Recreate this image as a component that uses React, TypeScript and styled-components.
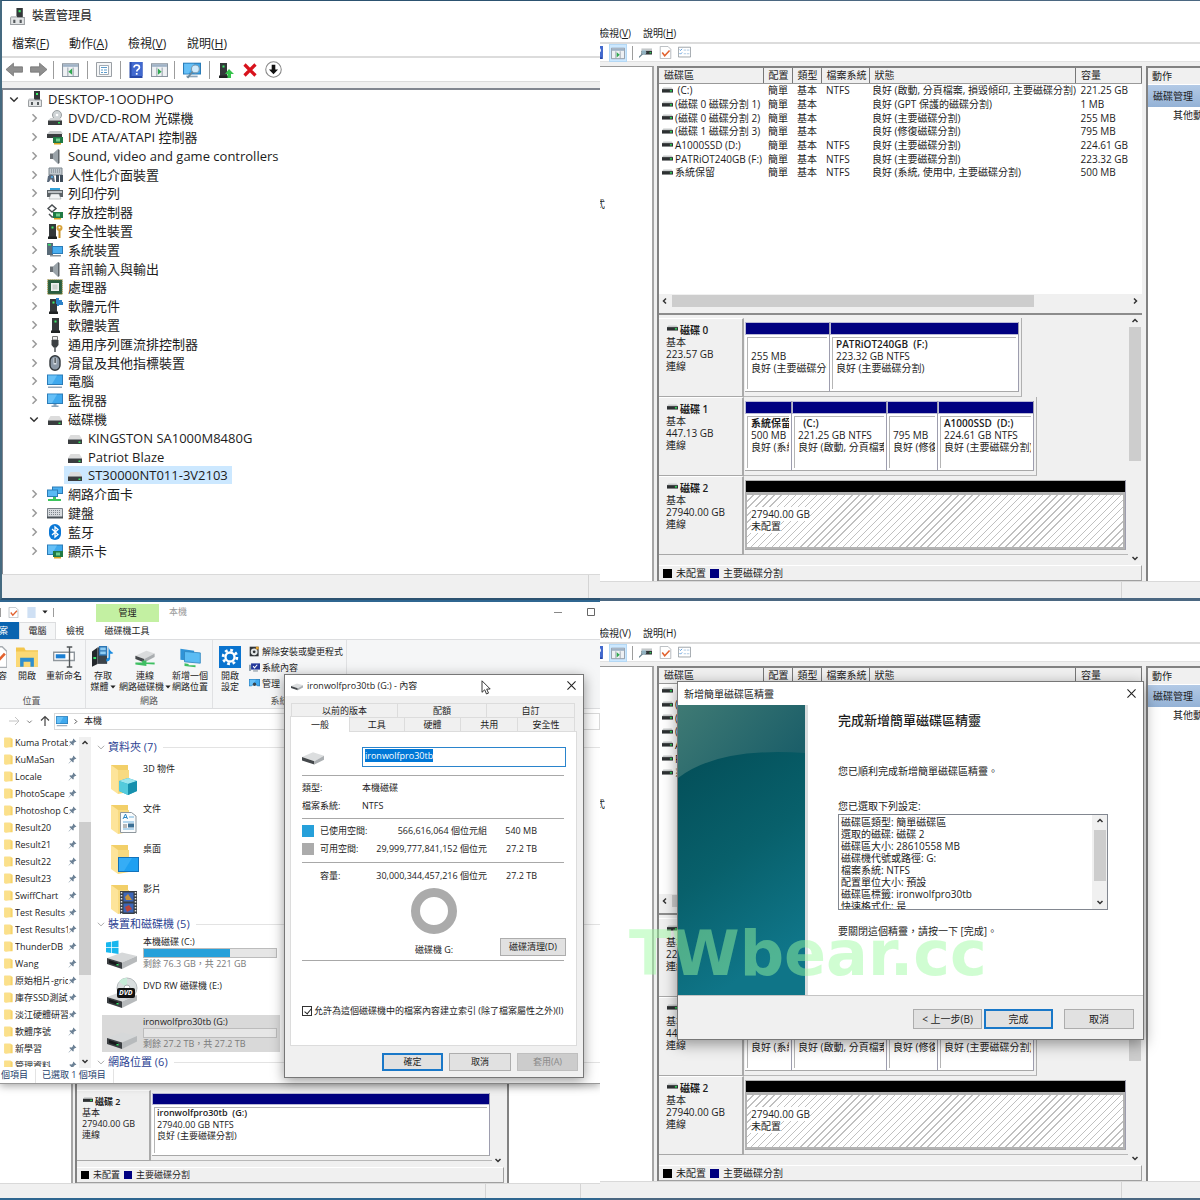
import React, { useEffect, useRef } from "react";
import styled, { createGlobalStyle, css } from "styled-components";

const GlobalStyle = createGlobalStyle`
  * { box-sizing: border-box; }
  body { margin: 0; background: #f0f0f0; }
  body, button, input, textarea, table {
    font-family: "Open Sans", "Noto Sans CJK TC", sans-serif;
    color: #1c1c1c;
  }
  button { border: 0; padding: 0; background: none; font-size: inherit; line-height: inherit; white-space: nowrap; }
`;

/* ---------- icons ---------- */

const disk = (
  <>
    <path d="M3.500 5h9l2.500 4H1z" fill="#dcdcdc" />
    <path d="M1 9h14v5H1z" fill="#3a3d3f" />
    <path d="M1 9h14v1H1z" fill="#8d9092" />
    <path d="M11.500 11.500h2v1.500h-2z" fill="#2fe05a" />
  </>
);
const board = (
  <>
    <path d="M6 8h10v6H6z" fill="#1f7a45" />
    <path d="M9 9.500h4v3H9z" fill="#6fce8b" />
    <path d="M7 14h7v1.500H7z" fill="#d9a520" />
  </>
);
const tower = (
  <>
    <path d="M5 1h7v13H5z" fill="#34383a" />
    <path d="M4 13.500h9V16H4z" fill="#202324" />
    <path d="M7.500 3.500h2v2h-2z" fill="#3df06a" />
  </>
);
const screen = (
  <>
    <path d="M0 1.500h16v10.500H0z" fill="#2b7cb8" />
    <path d="M1 2.500h14v8.500H1z" fill="#3fa9ee" />
    <path d="M1 2.500h9L5 11H1z" fill="#66c0f7" />
  </>
);
const speaker = (
  <>
    <path d="M3 5.500h3v5.500H3z" fill="#6a7075" />
    <path d="M6 5.500L11 1v15l-5-5z" fill="#9aa3a9" />
    <path d="M11 1l1.500 1v13L11 16z" fill="#5d6469" />
  </>
);
const panelWindow = (
  <>
    <path d="M.5 2.500h15v12H.5z" fill="#eef1f4" stroke="#8a949e" />
    <path d="M1 3h14v2.500H1z" fill="#9fb2c6" />
    <path d="M5.500 6v8M10.500 6v8" stroke="#9aa4ae" />
  </>
);
const folder = (
  <>
    <path d="M2 1h9l3 2v12H2z" fill="#f5d36b" />
    <path d="M2 1h9v13l-7 1.500L2 14z" fill="#fbe08b" />
  </>
);
const bigFolder = (
  <>
    <path d="M2 2h17v24H2z" fill="#f2cf68" />
    <path d="M2 2l7 5v24l-7-5z" fill="#fde49a" />
    <path d="M9 7h11v22l-11 2z" fill="#f8da80" />
  </>
);
const bigDisk = (
  <>
    <path d="M1 20L16 14.500l15 3.500-15 6.500z" fill="#d6d8d9" />
    <path d="M1 20l15 4.500V31L1 26z" fill="#3b3f42" />
    <path d="M16 24.500L31 18v5.500L16 31z" fill="#b7babc" />
    <path d="M3 22l9 3v3l-9-3z" fill="#16191b" />
    <path d="M10.500 26h2v1.500h-2z" fill="#35e36a" />
  </>
);

const ICONS: Record<string, React.ReactNode> = {
  computer: (
    <>
      <path d="M7 0h6v10H7z" fill="#34383a" />
      <path d="M9 2h2v2H9z" fill="#3df06a" />
      <path d="M1.500 9h13v6.500h-13z" fill="#e3e5e6" stroke="#9a9ea1" />
      <path d="M4 11h2v3H4zM10 11h2v3h-2z" fill="#555a5d" />
      <path d="M2 7.500h5l1 2H1z" fill="#c5c8ca" />
    </>
  ),
  disk,
  dvd: (
    <>
      <circle cx="10" cy="5" r="4.500" fill="#cfd4d6" stroke="#989d9f" />
      <circle cx="10" cy="5" r="1.300" fill="#fff" />
      <path d="M3.500 8h9l2.500 2.500H1z" fill="#cfd2d3" />
      <path d="M1 10.500h14V15H1z" fill="#3a3d3f" />
      <path d="M11 12h2v1.500h-2z" fill="#2fe05a" />
    </>
  ),
  ide: (
    <>
      <path d="M3 2h11l2 3H0z" fill="#c9cccd" />
      <path d="M0 5h15v4H0z" fill="#3a3d3f" />
      {board}
    </>
  ),
  speaker,
  hid: (
    <>
      <path d="M2 1h13v7H2z" fill="#c0c8ce" stroke="#7c868d" />
      <path d="M4 3h9M4 5h9" stroke="#6f7a82" strokeDasharray="1 1" />
      <path d="M1 9q3-3 6 0l1 6H6L4 12l-2 3H0z" fill="#59687a" />
      <path d="M9 8h3v7H9zM13 8h3v7h-3z" fill="#3f4d5b" />
      <circle cx="5" cy="10" r="1" fill="#4fb4f2" />
    </>
  ),
  printer: (
    <>
      <path d="M3 3h10v3H3z" fill="#30a0d8" />
      <path d="M0 5h16v7H0z" fill="#5b6266" />
      <path d="M1 6h14v2H1z" fill="#b9bec1" />
      <path d="M4 9h8l2 5H2z" fill="#f1f3f4" stroke="#8e9497" strokeWidth=".5" />
    </>
  ),
  storage: (
    <>
      <path d="M1 4.500L5 1l4 3.500L5 8z" fill="none" stroke="#4a4f52" strokeWidth="1.500" />
      <path d="M2 10l3 3h4" fill="none" stroke="#4a4f52" strokeWidth="1.500" />
      {board}
    </>
  ),
  security: (
    <>
      <g transform="translate(-3 0)">{tower}</g>
      <circle cx="12.500" cy="5" r="3" fill="#d8a23a" />
      <circle cx="12.500" cy="4.500" r="1" fill="#fff" />
      <path d="M11.500 7h2v8h-2z" fill="#c8922c" />
    </>
  ),
  system: (
    <>
      <path d="M0 1h6v12H0z" fill="#596b78" />
      <path d="M1 2h3v1.500H1z" fill="#35e36a" />
      <path d="M5 4h11v8H5z" fill="#2b7cb8" />
      <path d="M6 5h9v6H6z" fill="#49aef0" />
      <path d="M3 13h11v1.500H3z" fill="#8a9298" />
    </>
  ),
  cpu: (
    <>
      <path d="M.7.7h14.600v14.600H.7z" fill="#2a5e3f" stroke="#b99b4b" strokeDasharray="1 1" />
      <path d="M2 2h12v12H2z" fill="#2a5e3f" />
      <path d="M4 4h8v8H4z" fill="#eef1ef" />
      <path d="M5.500 5.500h5v5h-5z" fill="#ccd4cf" />
    </>
  ),
  softcomp: (
    <>
      <g transform="translate(-2 0)">{tower}</g>
      <path d="M9 0h3v2h3v2h1v3h-4v1h-2V6H9z" fill="#2b82c9" />
    </>
  ),
  softdev: tower,
  usb: (
    <>
      <path d="M5.500.5h5V4h-5z" fill="#eee" stroke="#777" />
      <path d="M4.500 4h7v5L9.500 11.500h-3L4.500 9z" fill="#3c4043" />
      <path d="M7.200 11h1.600v5H7.200z" fill="#55595c" />
    </>
  ),
  mouse: (
    <>
      <rect x="3" y=".7" width="10" height="14.600" rx="5" fill="#8b98a6" stroke="#2f3539" strokeWidth="1.400" />
      <path d="M6.500 3h3v6.500h-3z" fill="#d7dee4" />
      <path d="M7.500 3h1.200v5H7.500z" fill="#2f3539" />
    </>
  ),
  pc: (
    <>
      {screen}
      <path d="M1 13.500h14V15H1z" fill="#93a6b8" />
    </>
  ),
  monitor: (
    <>
      {screen}
      <path d="M6.500 12h3v1.500h2V15h-7v-1.500h2z" fill="#8aa5bb" />
    </>
  ),
  network: (
    <>
      <path d="M5 .5h11V8H5z" fill="#2b7cb8" />
      <path d="M6 1.500h9V7H6z" fill="#4db1f1" />
      <path d="M0 3.500h11V11H0z" fill="#2b7cb8" />
      <path d="M1 4.500h9V10H1z" fill="#5abaf5" />
      <path d="M6 11h3v2h5v2H1v-2h5z" fill="#3cc45d" />
    </>
  ),
  keyboard: (
    <>
      <path d="M.5 3.500h15v9H.5z" fill="#d6dade" stroke="#767e85" />
      <path d="M2 5.500h12M2 7.500h12M2 9.500h12" stroke="#7e868d" strokeDasharray="1 1" />
      <path d="M0 11.500h16v2H0z" fill="#4b5258" />
    </>
  ),
  bluetooth: (
    <>
      <rect x="2" y="0" width="12" height="16" rx="6" fill="#0a78d6" />
      <path d="M5 5l6 5.500L8 13V3l3 2.500L5 11" fill="none" stroke="#fff" strokeWidth="1.300" />
    </>
  ),
  display: (
    <>
      {screen}
      {board}
    </>
  ),
  back: <path d="M0 8l7-6v3.500h8.500v5H7V14z" fill="#8f8f8f" stroke="#6f6f6f" strokeWidth=".7" />,
  forward: <path d="M16 8L9 2v3.500H.5v5H9V14z" fill="#8f8f8f" stroke="#6f6f6f" strokeWidth=".7" />,
  treePane: (
    <>
      {panelWindow}
      <path d="M9.500 7v6L6 10z" fill="#2fa84f" />
    </>
  ),
  actionPane: (
    <>
      {panelWindow}
      <path d="M6.500 7v6L10 10z" fill="#2fa84f" />
    </>
  ),
  properties: (
    <>
      <path d="M.5.5h15v14H.5z" fill="#f5f6f7" stroke="#9a9fa4" />
      <path d="M3.500 3.500h9v9h-9z" fill="#fff" stroke="#a4acb4" />
      <path d="M5 5.500h6M5 8h2M8 8h3M5 10.500h2M8 10.500h3" stroke="#5c9ccc" />
    </>
  ),
  help: (
    <>
      <path d="M1.500 0h13v16h-13z" fill="#2748a8" />
      <path d="M3.500 0h11v14h-11z" fill="#4169cf" />
      <path d="M6 5.500q0-2.300 2.700-2.300t2.700 2.200q0 1.300-1.400 2.100-1.200.7-1.200 2M8.700 11v1.800" fill="none" stroke="#fff" strokeWidth="1.700" />
    </>
  ),
  scan: (
    <>
      {screen}
      <path d="M3 13h10v1.500H3z" fill="#8aa5bb" />
      <circle cx="11" cy="7" r="3.500" fill="#cfeafc" stroke="#7d99ad" />
      <path d="M8.500 9.500L4 15" stroke="#6d8799" strokeWidth="1.500" />
    </>
  ),
  update: (
    <>
      <g transform="translate(-3 0)">{tower}</g>
      <path d="M11 7l5 5h-3v4H9.500v-4H7z" fill="#35c24b" />
    </>
  ),
  remove: <path d="M2.500 2.500l11 11M13.500 2.500l-11 11" stroke="#d8121c" strokeWidth="3.200" />,
  disable: (
    <>
      <circle cx="8" cy="8" r="7.300" fill="#fff" stroke="#888" />
      <path d="M6.300 3.500h3.400V8h2.600L8 12.500 3.700 8h2.600z" fill="#111" />
    </>
  ),
  rescan: (
    <>
      <path d="M3 3h13v3H3z" fill="#c4c8ca" />
      <path d="M3 6h13v4.500H3z" fill="#34383a" />
      <path d="M13 7.500h2V9h-2z" fill="#2fe05a" />
      <circle cx="6" cy="8" r="3" fill="#a9cfe2" opacity=".8" />
      <path d="M4 10l-4 4" stroke="#6c8492" strokeWidth="1.700" />
    </>
  ),
  check: (
    <>
      <path d="M1.500.5H11L14.500 4v11.500h-13z" fill="#fff" stroke="#a8adb2" />
      <path d="M4 8l3 4 6-6.500" fill="none" stroke="#e2622f" strokeWidth="1.900" />
    </>
  ),
  list: (
    <>
      <path d="M.5 1.500h15v12H.5z" fill="#fff" stroke="#8b9299" />
      <path d="M2 4.500l1 1 2-2M2 9l1 1 2-2" fill="none" stroke="#2d7fd0" />
      <path d="M7 5h3M11 5h3M7 9.500h3M11 9.500h3" stroke="#9cbfdf" />
    </>
  ),
  page: <path d="M2 0h12v16H2z" fill="#cfe0f4" />,
  volume: (
    <>
      <path d="M2 3.500h12l2 2.500H0z" fill="#c8cbcc" />
      <path d="M0 6h16v5H0z" fill="#2d3032" />
      <path d="M11.500 7.500h3v2h-3z" fill="#2fe05a" />
    </>
  ),
  folder,
  pin: (
    <path d="M9.500 1L15 6.500l-1.500.8-1-.3-2.500 2.500.2 3L9 13.500 6 10.500 1.500 15 1 14.500 5.500 10l-3-3L3.500 5.800l3 .2L9 3.500l-.3-1z" fill="#6d8296" />
  ),
  openFolder: (
    <>
      <path d="M0 1h6l1 2h9v12H0z" fill="#f3c64d" />
      <path d="M0 4h16v11H0z" fill="#fbd976" />
      <path d="M3 15V8.500h10V15h-2.500v-3.500h-5V15z" fill="#2f8fce" />
    </>
  ),
  rename: (
    <>
      <path d="M.5 4.500h15v6H.5z" fill="#fff" stroke="#8f969c" />
      <path d="M2 6h7v3H2z" fill="#1b7fd3" />
      <path d="M10 .7h4M12 .7v14.600M10 15.300h4" stroke="#505558" />
    </>
  ),
  media: (
    <>
      <path d="M0 4l4-3v12l-4 2z" fill="#22272b" />
      <path d="M4 1h7v12H4z" fill="#3b434a" />
      <path d="M5 0h6v7H5z" fill="#2c76b5" />
      <path d="M6 1h4v2H6zM6 4h4v2H6z" fill="#8ecbf2" />
      <path d="M12 0q0 3 3.500 5-1 1-2.300.6V9.500q-.5 2-2.700 1.700-.8-2 1.500-2.700z" fill="#1b8ce0" />
      <path d="M1 8h2v1.500H1z" fill="#35e36a" />
    </>
  ),
  netDrive: (
    <>
      <path d="M1 7l8-3.500 6 2L7.500 9.500z" fill="#d9dbdc" />
      <path d="M1 7l6.500 2.500V12L1 9.500z" fill="#44484b" />
      <path d="M7.500 9.500l7.500-4V8l-7.500 4z" fill="#a9adb0" />
      <path d="M1 12h5v-1.500h3V12h6v1.500L9 13v1.500L1 13.500z" fill="#3fbf62" />
    </>
  ),
  netPlace: (
    <>
      <path d="M1 2l10 1.500V11L1 10z" fill="#2f93d7" />
      <path d="M4 4l11.500 1v7.500L4 11.500z" fill="#5bbcf4" stroke="#2f86c0" strokeWidth=".6" />
      <path d="M4 12.500l3 .5v1h5v1.500L4 14.500z" fill="#3fbf62" />
    </>
  ),
  gear: (
    <>
      <path d="M0 0h16v16H0z" fill="#0a74cf" />
      <circle cx="8" cy="8" r="3.300" fill="none" stroke="#fff" strokeWidth="1.700" />
      <circle cx="8" cy="8" r="5" fill="none" stroke="#fff" strokeWidth="2" strokeDasharray="2 1.927" />
    </>
  ),
  uninstall: (
    <>
      <path d="M1 1h13v14H1z" fill="#2f3336" />
      <circle cx="7.500" cy="8.500" r="5" fill="#e2e5e6" />
      <circle cx="7.500" cy="8.500" r="2" fill="#2f3336" />
      <path d="M10 1h4v4h-4z" fill="#e0a02f" />
    </>
  ),
  sysprops: (
    <>
      <path d="M0 4h3v9H0z" fill="#8fa0ae" />
      <path d="M3 2h13v9H3z" fill="#23379a" />
      <path d="M6 6l2 2.500L12 4" fill="none" stroke="#fff" strokeWidth="1.500" />
      <path d="M6 12h7v2H6z" fill="#98a4ad" />
    </>
  ),
  manage: (
    <>
      {screen}
      <path d="M3 16q0-6 5-6t5 6z" fill="#f2f5f7" />
      <circle cx="8" cy="9" r="2.500" fill="#39444c" />
    </>
  ),
  smallDrive: (
    <>
      <path d="M0 8l8-3.500 8 2.500-7 4z" fill="#dcdedf" />
      <path d="M0 8l9 3v2.500L0 10.500z" fill="#44484b" />
      <path d="M9 11l7-4v3l-7 3.500z" fill="#abafb2" />
    </>
  ),
};

const BIG_ICONS: Record<string, React.ReactNode> = {
  objects: (
    <>
      {bigFolder}
      <path d="M10 18l9-3 9 3v10l-9 4-9-4z" fill="#27a8c4" />
      <path d="M10 18l9-3 9 3-9 3z" fill="#9be6ee" />
      <path d="M19 21l9-3v10l-9 4z" fill="#1690ad" />
      <path d="M10 18l9 3v11l-9-4z" fill="#54cbdc" />
    </>
  ),
  documents: (
    <>
      {bigFolder}
      <path d="M11.500 9.500h11L27 13v16.500H11.500z" fill="#fafcfd" stroke="#8e979d" />
      <path d="M14 16l2.500-5 2 5M15 14.500h3" fill="none" stroke="#2b86c5" />
      <path d="M20 14h5M14 19h11M14 26h11" stroke="#6fb0dc" />
      <path d="M19 20.500h6v4h-6z" fill="#3b6f94" />
      <path d="M14 22h4M14 24h4" stroke="#777" />
    </>
  ),
  desktop: (
    <>
      {bigFolder}
      <path d="M9 14h21v15H9z" fill="#1272bb" />
      <path d="M10 15h19v13H10z" fill="#1ea0f1" />
      <path d="M10 15h13l-8 13h-5z" fill="#35adf6" />
    </>
  ),
  videos: (
    <>
      {bigFolder}
      <path d="M11 8h17v23H11z" fill="#3a3f45" />
      <path d="M12.500 9v22M26.500 9v22" stroke="#e8eaec" strokeWidth="1.500" strokeDasharray="1.500 1.500" />
      <path d="M14.500 9.500h10v9h-10zM14.500 20.500h10v9h-10z" fill="#3c66b8" />
      <path d="M16 14l3-3 4 6h-6z" fill="#c5923e" />
      <path d="M20 22l3 4-5 3-2-5z" fill="#b9453c" />
    </>
  ),
  windowsDrive: (
    <>
      {bigDisk}
      <path d="M0 4.500L5.300 3.700V9H0zM6 3.600L12.500 2.600V9H6zM0 9.800h5.300v5.200L0 14.200zM6 9.800h6.500v6.300L6 15.100z" fill="#18b7ee" />
    </>
  ),
  dvdDrive: (
    <>
      {bigDisk}
      <circle cx="21" cy="11" r="10" fill="#d9dedf" stroke="#b5bbbd" />
      <path d="M21 11L13 4.500a10 10 0 0 1 8-3.500z" fill="#c7ecd8" />
      <circle cx="21" cy="11" r="3" fill="#fff" stroke="#aab0b2" />
    </>
  ),
  drive: bigDisk,
};

const Svg = styled.svg<{ $w: number }>`
  width: ${(p) => p.$w}px;
  height: ${(p) => p.$w}px;
  flex: none;
  display: block;
`;
const Icon = ({ name, size = 16 }: { name: string; size?: number }) => (
  <Svg $w={size} viewBox="0 0 16 16" aria-hidden="true">{ICONS[name]}</Svg>
);
const BigIcon = ({ name, size = 32 }: { name: string; size?: number }) => (
  <Svg $w={size} viewBox="0 0 32 32" aria-hidden="true">{BIG_ICONS[name]}</Svg>
);

const CHEVRONS = {
  up: "M3 10l5-5 5 5",
  down: "M3 6l5 5 5-5",
  left: "M10 3L5 8l5 5",
  right: "M6 3l5 5-5 5",
};
const Chevron = ({ dir, size = 8, color = "#333", weight = 3 }: { dir: keyof typeof CHEVRONS; size?: number; color?: string; weight?: number }) => (
  <Svg $w={size} viewBox="0 0 16 16" aria-hidden="true">
    <path d={CHEVRONS[dir]} fill="none" stroke={color} strokeWidth={weight} />
  </Svg>
);

/* ---------- shared window parts ---------- */

const Collage = styled.main`
  display: grid;
  grid-template-columns: repeat(2, minmax(0, 1fr));
  grid-auto-rows: minmax(600px, 1fr);
  min-height: 100vh;
`;

const Panel = styled.section<{ $edge?: string; $left?: boolean; $top?: number }>`
  position: relative;
  display: flex;
  flex-direction: column;
  min-width: 0;
  overflow: hidden;
  background: #fff;
  border-top: ${(p) => p.$top ?? 1}px solid ${(p) => p.$edge ?? "#3f5a75"};
  border-bottom: 2px solid ${(p) => p.$edge ?? "#3f5a75"};
  border-left: ${(p) => (p.$left ? "2px solid #456a80" : "0")};
`;

const StatusBar = styled.footer<{ $h: number }>`
  display: flex;
  justify-content: flex-end;
  flex: none;
  height: ${(p) => p.$h}px;
  background: #f0f0f0;
  border-top: 1px solid #d9d9d9;
`;
const StatusCell = styled.div<{ $w: number }>`
  width: ${(p) => p.$w}px;
  border-left: 1px solid #d4d4d4;
`;

const Divider = styled.span<{ $h?: number }>`
  width: 1px;
  height: ${(p) => p.$h ?? 18}px;
  background: #9c9c9c;
  flex: none;
`;

const PushButton = styled.button<{ $w: number; $h: number; $primary?: boolean }>`
  width: ${(p) => p.$w}px;
  height: ${(p) => p.$h}px;
  background: #e1e1e1;
  border: ${(p) => (p.$primary ? "2px solid #1a78c8" : "1px solid #adadad")};
  &:disabled { background: #cccccc; border-color: #bfbfbf; color: #8a8a8a; }
`;

/* ---------- device manager ---------- */

const DevTitle = styled.header`
  display: flex;
  align-items: center;
  gap: 6px;
  height: 30px;
  padding-left: 7px;
  font-size: 12px;
  line-height: 16px;
`;
const DevMenu = styled.nav`
  display: grid;
  grid-template-columns: 57px 59px 59px auto;
  justify-content: start;
  align-items: center;
  height: 25px;
  padding-left: 10px;
  font-size: 12px;
  line-height: 16px;
  text-align: left;
  button { text-align: left; }
`;
const DevToolbar = styled.div`
  display: flex;
  align-items: center;
  gap: 6px;
  height: 26px;
  padding-left: 3px;
  border-top: 2px solid #dcdcdc;
  border-bottom: 1px solid #dcdcdc;
`;
const ToolButton = styled.button<{ $pad?: number; $on?: boolean }>`
  margin: 0 ${(p) => p.$pad ?? 1}px;
  ${(p) => p.$on && css`
    padding: 1px;
    background: #cce8ff;
    border: 1px solid #b4d8f5;
  `}
`;
const TreeFrame = styled.div`
  display: flex;
  flex-direction: column;
  flex: 1;
  padding-top: 6px;
  background: #f0f0f0;
`;
const Tree = styled.ul`
  display: grid;
  grid-auto-rows: 1fr;
  flex: 1;
  margin: 0;
  padding: 0 0 14px;
  list-style: none;
  background: #fff;
  border-top: 2px solid #828790;
  border-left: 1px solid #828790;
  font-size: 13px;
  line-height: 18px;
`;
const TreeItem = styled.li<{ $level: number }>`
  display: flex;
  align-items: center;
  padding-left: ${(p) => [5, 25, 61][p.$level]}px;
`;
const Twisty = styled.button`
  width: 12px;
  margin-right: 6px;
`;
const TreeLabel = styled.span<{ $leaf?: boolean; $selected?: boolean }>`
  display: flex;
  align-items: center;
  gap: 5px;
  padding: 0 4px 0 ${(p) => (p.$leaf ? 3 : 1)}px;
  white-space: nowrap;
  ${(p) => p.$selected && css` background: #cce8ff; `}
`;

type Node = { level: number; icon: string; text: string; open?: boolean; selected?: boolean };
const DEVICES: Node[] = [
  { level: 0, icon: "computer", text: "DESKTOP-1OODHPO", open: true },
  { level: 1, icon: "dvd", text: "DVD/CD-ROM 光碟機" },
  { level: 1, icon: "ide", text: "IDE ATA/ATAPI 控制器" },
  { level: 1, icon: "speaker", text: "Sound, video and game controllers" },
  { level: 1, icon: "hid", text: "人性化介面裝置" },
  { level: 1, icon: "printer", text: "列印佇列" },
  { level: 1, icon: "storage", text: "存放控制器" },
  { level: 1, icon: "security", text: "安全性裝置" },
  { level: 1, icon: "system", text: "系統裝置" },
  { level: 1, icon: "speaker", text: "音訊輸入與輸出" },
  { level: 1, icon: "cpu", text: "處理器" },
  { level: 1, icon: "softcomp", text: "軟體元件" },
  { level: 1, icon: "softdev", text: "軟體裝置" },
  { level: 1, icon: "usb", text: "通用序列匯流排控制器" },
  { level: 1, icon: "mouse", text: "滑鼠及其他指標裝置" },
  { level: 1, icon: "pc", text: "電腦" },
  { level: 1, icon: "monitor", text: "監視器" },
  { level: 1, icon: "disk", text: "磁碟機", open: true },
  { level: 2, icon: "disk", text: "KINGSTON SA1000M8480G" },
  { level: 2, icon: "disk", text: "Patriot Blaze" },
  { level: 2, icon: "disk", text: "ST30000NT011-3V2103", selected: true },
  { level: 1, icon: "network", text: "網路介面卡" },
  { level: 1, icon: "keyboard", text: "鍵盤" },
  { level: 1, icon: "bluetooth", text: "藍牙" },
  { level: 1, icon: "display", text: "顯示卡" },
];

const MenuItem = ({ text, mnemonic, plain }: { text: string; mnemonic: string; plain?: boolean }) => (
  <button type="button">{text}({plain ? mnemonic : <u>{mnemonic}</u>})</button>
);

const DeviceManager = () => (
  <Panel $left $edge="#2c5270">
    <DevTitle><Icon name="computer" size={17} />裝置管理員</DevTitle>
    <DevMenu>
      <MenuItem text="檔案" mnemonic="F" />
      <MenuItem text="動作" mnemonic="A" />
      <MenuItem text="檢視" mnemonic="V" />
      <MenuItem text="說明" mnemonic="H" />
    </DevMenu>
    <DevToolbar>
      <ToolButton aria-label="上一頁"><Icon name="back" size={17} /></ToolButton>
      <ToolButton aria-label="下一頁" $pad={0}><Icon name="forward" size={17} /></ToolButton>
      <Divider />
      <ToolButton aria-label="主控台樹狀目錄" $pad={2}><Icon name="treePane" size={17} /></ToolButton>
      <Divider />
      <ToolButton aria-label="內容" $pad={2}><Icon name="properties" /></ToolButton>
      <Divider />
      <ToolButton aria-label="說明" $pad={1}><Icon name="help" /></ToolButton>
      <ToolButton aria-label="動作窗格" $pad={0}><Icon name="actionPane" size={17} /></ToolButton>
      <Divider />
      <ToolButton aria-label="掃描硬體變更" $pad={2}><Icon name="scan" size={18} /></ToolButton>
      <Divider />
      <ToolButton aria-label="更新驅動程式" $pad={2}><Icon name="update" /></ToolButton>
      <ToolButton aria-label="解除安裝裝置" $pad={0}><Icon name="remove" /></ToolButton>
      <ToolButton aria-label="停用裝置"><Icon name="disable" size={17} /></ToolButton>
    </DevToolbar>
    <TreeFrame>
      <Tree>
        {DEVICES.map((n) => (
          <TreeItem key={n.text} $level={n.level}>
            {n.level < 2 && (
              <Twisty type="button" aria-label={n.open ? "收合" : "展開"}>
                <Chevron dir={n.open ? "down" : "right"} size={12} color={n.open ? "#333" : "#999"} weight={2} />
              </Twisty>
            )}
            <TreeLabel $leaf={n.level === 2} $selected={n.selected}><Icon name={n.icon} />{n.text}</TreeLabel>
          </TreeItem>
        ))}
      </Tree>
    </TreeFrame>
    <StatusBar $h={24}><StatusCell $w={12} /></StatusBar>
  </Panel>
);

/* ---------- disk management ---------- */

const DiskMenu = styled.nav`
  display: flex;
  align-items: flex-end;
  gap: 12px;
  height: 43px;
  padding-bottom: 2px;
  border-bottom: 2px solid #dcdcdc;
  font-size: 10px;
  line-height: 14px;
`;
const DiskToolbar = styled.div`
  display: flex;
  align-items: center;
  gap: 4px;
  height: 18px;
  border-bottom: 1px solid #e2e2e2;
`;
const CutLeft = styled.div<{ $w: number }>`
  display: flex;
  justify-content: flex-end;
  width: ${(p) => p.$w}px;
  overflow: hidden;
  white-space: nowrap;
`;
const DiskBody = styled.div`
  display: flex;
  flex: 1;
  gap: 3px;
  padding-top: 4px;
  background: #f0f0f0;
`;
const SidePane = styled.aside<{ $w: number }>`
  width: ${(p) => p.$w}px;
  padding-top: 130px;
  background: #fff;
  border-top: 1px solid #999;
  border-right: 2px solid #a6a6a6;
  font-size: 10px;
  line-height: 14px;
`;
const Center = styled.div`
  display: flex;
  flex-direction: column;
  flex: 1;
  min-width: 0;
  border-left: 2px solid #828282;
`;
const VolumeList = styled.div`
  display: flex;
  flex-direction: column;
  height: 249px;
  background: #fff;
  border-top: 2px solid #828282;
  border-bottom: 2px solid #8c8c8c;
`;
const VolumeTable = styled.table`
  width: 100%;
  height: 111px;
  table-layout: fixed;
  border-collapse: collapse;
  font-size: 10px;
  line-height: 12px;
  white-space: nowrap;
  th, td { padding: 0 0 0 5px; text-align: left; font-weight: 400; }
  td:nth-child(5) { padding-left: 3px; }
  th {
    height: 15px;
    background: #f0f0f0;
    border-right: 1px solid #777;
    border-bottom: 1px solid #999;
  }
`;
const Col = styled.col<{ $w?: number }>`
  width: ${(p) => (p.$w ? `${p.$w}px` : "auto")};
`;
const VolumeName = styled.span`
  display: flex;
  align-items: center;
  gap: 2px;
  margin-left: -2px;
  white-space: pre;
`;
const HScroll = styled.div`
  display: flex;
  align-items: center;
  gap: 3px;
  height: 19px;
  margin-top: auto;
  padding: 0 3px 5px 2px;
  background: #f0f0f0;
`;
const HThumb = styled.div`
  flex: 0 1 362px;
  height: 12px;
  margin-right: auto;
  background: #cdcdcd;
`;
const GraphArea = styled.div`
  display: flex;
  flex: 1;
  min-height: 0;
`;
const DiskRows = styled.div`
  flex: 1;
  min-width: 0;
  padding: 3px 0 8px;
`;
const VScroll = styled.div<{ $w?: number }>`
  display: flex;
  flex-direction: column;
  align-items: center;
  gap: 2px;
  flex: none;
  width: ${(p) => p.$w ?? 14}px;
  padding: 2px 0 3px;
  background: #f0f0f0;
`;
const VThumb = styled.div<{ $top?: number; $h: number }>`
  width: 12px;
  height: ${(p) => p.$h}px;
  margin-top: ${(p) => p.$top ?? 0}px;
  margin-bottom: auto;
  background: #cdcdcd;
`;
const DiskRow = styled.div<{ $small?: boolean }>`
  display: flex;
  height: ${(p) => (p.$small ? 71 : 79)}px;
  font-size: ${(p) => (p.$small ? 9 : 10)}px;
  line-height: ${(p) => (p.$small ? 11 : 12)}px;
`;
const DiskLabel = styled.div<{ $small?: boolean }>`
  flex: none;
  width: ${(p) => (p.$small ? 74 : 85)}px;
  padding: 5px 0 0 ${(p) => (p.$small ? 5 : 7)}px;
  border-top: 1px solid #fff;
  border-right: 2px solid #aaa;
  border-bottom: 1px solid #a8a8a8;
  white-space: nowrap;
  strong { display: flex; align-items: center; gap: 2px; padding-left: 1px; font-weight: 600; }
  strong svg { margin-top: -3px; }
`;
const DiskFrame = styled.div<{ $fill?: boolean; $small?: boolean }>`
  display: flex;
  flex: ${(p) => (p.$fill ? "1 1 auto" : "0 1 auto")};
  min-width: 0;
  padding: ${(p) => (p.$small ? 3 : 4)}px 2px 4px 1px;
  border-right: ${(p) => (p.$fill ? "0" : "1px solid #b0b0b0")};
  border-bottom: 1px solid #b8b8b8;
`;
const VolumeBox = styled.div<{ $w?: number }>`
  display: flex;
  flex-direction: column;
  flex: ${(p) => (p.$w ? "0 1 auto" : "1 1 auto")};
  width: ${(p) => (p.$w ? `${p.$w}px` : "auto")};
  min-width: 0;
  border-right: 1px solid #9d9dae;
  border-bottom: 1px solid #a8a8a8;
`;
const Strip = styled.div<{ $free?: boolean; $small?: boolean }>`
  height: ${(p) => (p.$small ? 12 : 13)}px;
  background: ${(p) => (p.$free ? "#000" : "#000080")};
  border: solid ${(p) => (p.$free ? "#b3b3b3" : "#b9b9d6")};
  border-width: 1px 0 1px 1px;
`;
const VolumeText = styled.div<{ $free?: boolean; $small?: boolean }>`
  flex: 1;
  padding: ${(p) => (p.$small ? 0 : 1)}px 0 0 ${(p) => (p.$small ? 3 : 4)}px;
  overflow: hidden;
  white-space: pre;
  background: ${(p) => (p.$free
    ? "repeating-linear-gradient(135deg, #fff 0 4px, #c0c0c0 4px 5px)"
    : "#fff")};
  border: 2px solid ${(p) => (p.$free ? "#b3b3b3" : "#fff")};
  box-shadow: ${(p) => (p.$free ? "none" : "inset 1px 1px 0 #b5b5b5")};
  strong { display: block; min-height: 12px; font-weight: 600; }
  span { background: ${(p) => (p.$free ? "#fff" : "transparent")}; }
`;
const Legend = styled.div<{ $small?: boolean }>`
  display: flex;
  align-items: center;
  gap: 4px;
  height: 16px;
  padding-left: 4px;
  border-top: 1px solid #fff;
  border-right: 1px solid #a0a0a0;
  border-bottom: 1px solid #a0a0a0;
  font-size: ${(p) => (p.$small ? 9 : 10)}px;
  line-height: 12px;
`;
const Swatch = styled.i<{ $c: string; $s?: number }>`
  width: ${(p) => p.$s ?? 9}px;
  height: ${(p) => p.$s ?? 9}px;
  background: ${(p) => p.$c};
  flex: none;
`;
const Actions = styled.aside`
  width: 54px;
  flex: none;
  margin-left: 1px;
  overflow: hidden;
  background: #fff;
  border-top: 2px solid #828282;
  border-left: 2px solid #828282;
  font-size: 10px;
  line-height: 16px;
  white-space: nowrap;
  h3 { margin: 0; padding-left: 4px; font-size: 10px; font-weight: 400; background: #f0f0f0; }
  h4 { margin: 1px 0 0; padding: 3px 0 3px 5px; font-size: 10px; font-weight: 400; background: linear-gradient(#b3cae6, #94b2d6); }
  p { margin: 0; padding-left: 25px; }
`;

const VOLUMES = [
  [" (C:)", "NTFS", "良好 (啟動, 分頁檔案, 損毀傾印, 主要磁碟分割)", "221.25 GB"],
  ["(磁碟 0 磁碟分割 1)", "", "良好 (GPT 保護的磁碟分割)", "1 MB"],
  ["(磁碟 0 磁碟分割 2)", "", "良好 (主要磁碟分割)", "255 MB"],
  ["(磁碟 1 磁碟分割 3)", "", "良好 (修復磁碟分割)", "795 MB"],
  ["A1000SSD (D:)", "NTFS", "良好 (主要磁碟分割)", "224.61 GB"],
  ["PATRiOT240GB (F:)", "NTFS", "良好 (主要磁碟分割)", "223.32 GB"],
  ["系統保留", "NTFS", "良好 (系統, 使用中, 主要磁碟分割)", "500 MB"],
];
type Vol = { w?: number; name?: string; size: string; state: string; free?: boolean };
const DISKS: { id: number; size: string; vols: Vol[] }[] = [
  { id: 0, size: "223.57 GB", vols: [
    { w: 85, size: "255 MB", state: "良好 (主要磁碟分割)" },
    { w: 189, name: "PATRiOT240GB  (F:)", size: "223.32 GB NTFS", state: "良好 (主要磁碟分割)" },
  ] },
  { id: 1, size: "447.13 GB", vols: [
    { w: 47, name: "系統保留", size: "500 MB NTFS", state: "良好 (系統, 使用中, 主要磁碟分割)" },
    { w: 95, name: "  (C:)", size: "221.25 GB NTFS", state: "良好 (啟動, 分頁檔案, 損毀傾印)" },
    { w: 51, size: "795 MB", state: "良好 (修復磁碟分割)" },
    { w: 96, name: "A1000SSD  (D:)", size: "224.61 GB NTFS", state: "良好 (主要磁碟分割)" },
  ] },
  { id: 2, size: "27940.00 GB", vols: [{ size: "27940.00 GB", state: "未配置", free: true }] },
];

const Disk = ({ id, size, vols, small }: { id: number; size: string; vols: Vol[]; small?: boolean }) => (
  <DiskRow $small={small}>
    <DiskLabel $small={small}>
      <strong><Icon name="volume" size={small ? 10 : 11} />磁碟 {id}</strong>
      <div>基本</div><div>{size}</div><div>連線</div>
    </DiskLabel>
    <DiskFrame $fill={!vols[0].w} $small={small}>
      {vols.map((v, i) => (
        <VolumeBox key={i} $w={v.w}>
          <Strip $free={v.free} $small={small} />
          <VolumeText $free={v.free} $small={small}>
            <strong>{v.name}</strong>
            <div><span>{v.size}</span></div>
            <div><span>{v.state}</span></div>
          </VolumeText>
        </VolumeBox>
      ))}
    </DiskFrame>
  </DiskRow>
);

const DiskLegend = ({ small }: { small?: boolean }) => (
  <Legend $small={small}>
    <Swatch $c="#000" $s={small ? 8 : 9} />未配置
    <Swatch $c="#000080" $s={small ? 8 : 9} />主要磁碟分割
  </Legend>
);

const DiskManagement = ({ plain, children }: { plain?: boolean; children?: React.ReactNode }) => (
  <Panel $edge="#4b6781">
    <DiskMenu>
      <CutLeft $w={31}><MenuItem text="檢視" mnemonic="V" plain={plain} /></CutLeft>
      <MenuItem text="說明" mnemonic="H" plain={plain} />
    </DiskMenu>
    <DiskToolbar>
      <CutLeft $w={4}><Icon name="help" size={13} /></CutLeft>
      <ToolButton aria-label="動作窗格" $on><Icon name="actionPane" size={14} /></ToolButton>
      <Divider $h={14} />
      <ToolButton aria-label="重新掃描磁碟" $pad={2}><Icon name="rescan" size={13} /></ToolButton>
      <ToolButton aria-label="檢查"><Icon name="check" size={13} /></ToolButton>
      <ToolButton aria-label="清單"><Icon name="list" size={13} /></ToolButton>
    </DiskToolbar>
    <DiskBody>
      <SidePane $w={54}><CutLeft $w={5}>格式</CutLeft></SidePane>
      <Center>
        <VolumeList>
          <VolumeTable>
            <colgroup><Col $w={104} /><Col $w={29} /><Col $w={29} /><Col $w={48} /><Col /><Col $w={66} /></colgroup>
            <thead><tr><th>磁碟區</th><th>配置</th><th>類型</th><th>檔案系統</th><th>狀態</th><th>容量</th></tr></thead>
            <tbody>
              {VOLUMES.map(([name, fs, state, cap]) => (
                <tr key={name}>
                  <td><VolumeName><Icon name="volume" size={11} />{name}</VolumeName></td>
                  <td>簡單</td><td>基本</td><td>{fs}</td><td>{state}</td><td>{cap}</td>
                </tr>
              ))}
            </tbody>
          </VolumeTable>
          <HScroll><Chevron dir="left" /><HThumb /><Chevron dir="right" /></HScroll>
        </VolumeList>
        <GraphArea>
          <DiskRows>{DISKS.map((d) => <Disk key={d.id} {...d} />)}</DiskRows>
          <VScroll><Chevron dir="up" /><VThumb $h={134} /><Chevron dir="down" /></VScroll>
        </GraphArea>
        <DiskLegend />
      </Center>
      <Actions>
        <h3>動作</h3>
        <h4>磁碟管理</h4>
        <p>其他動作</p>
      </Actions>
    </DiskBody>
    <StatusBar $h={17}><StatusCell $w={79} /></StatusBar>
    {children}
  </Panel>
);

/* ---------- new simple volume wizard ---------- */

const Wizard = styled.div`
  position: absolute;
  left: 77px;
  top: 80px;
  width: 467px;
  background: #fff;
  border: 1px solid #777;
  box-shadow: 0 4px 14px rgba(0, 0, 0, 0.4);
  font-size: 10px;
  line-height: 14px;
`;
const WizardTitle = styled.header`
  display: flex;
  align-items: center;
  justify-content: space-between;
  height: 23px;
  padding: 0 7px 0 6px;
`;
const WizardBody = styled.div`
  display: flex;
  height: 290px;
`;
const Banner = styled.div`
  flex: none;
  width: 130px;
  border-right: 3px solid #d8dcdd;
  svg { display: block; width: 100%; height: 100%; }
`;
const WizardText = styled.div`
  flex: 1;
  padding: 5px 35px 0 30px;
  h2 { margin: 0 0 34px; font-size: 13px; line-height: 20px; font-weight: 500; }
  p { margin: 0; }
  label { display: block; margin: 21px 0 1px; }
`;
const Settings = styled.div`
  display: flex;
  height: 96px;
  margin: 0 0 14px;
  border: 1px solid #828790;
`;
const SettingsText = styled.textarea`
  flex: 1;
  padding: 1px 2px 0;
  border: 0;
  resize: none;
  outline: none;
  overflow: hidden;
  font-size: 10px;
  line-height: 12px;
`;
const WizardFooter = styled.footer`
  display: flex;
  align-items: center;
  justify-content: flex-end;
  gap: 2px;
  height: 44px;
  padding: 2px 9px 0 0;
  background: #f0f0f0;
  border-top: 1px solid #c4c4c4;
  > :last-child { margin-left: 9px; }
`;
const Watermark = styled.div`
  position: absolute;
  left: 29px;
  top: 317px;
  font: bold 62px/72px "DejaVu Sans", sans-serif;
  color: rgba(156, 251, 160, 0.47);
  pointer-events: none;
`;
const SETTINGS = `磁碟區類型: 簡單磁碟區
選取的磁碟: 磁碟 2
磁碟區大小: 28610558 MB
磁碟機代號或路徑: G:
檔案系統: NTFS
配置單位大小: 預設
磁碟區標籤: ironwolfpro30tb
快速格式化: 是`;

const CloseMark = () => (
  <Svg $w={9} viewBox="0 0 10 10" aria-hidden="true"><path d="M.5.5l9 9M9.500.5l-9 9" stroke="#222" strokeWidth="1.200" /></Svg>
);

const VolumeWizard = () => (
  <>
    <Wizard role="dialog" aria-label="新增簡單磁碟區精靈">
      <WizardTitle>新增簡單磁碟區精靈<button type="button" aria-label="關閉"><CloseMark /></button></WizardTitle>
      <WizardBody>
        <Banner>
          <svg viewBox="0 0 127 290" preserveAspectRatio="none" aria-hidden="true">
            <defs>
              <linearGradient id="sea" x1="0" y1="0" x2=".3" y2="1">
                <stop offset=".2" stopColor="#04505a" />
                <stop offset=".6" stopColor="#08606b" />
                <stop offset="1" stopColor="#0f7588" />
              </linearGradient>
              <linearGradient id="sky" x1="0" y1="0" x2="1" y2=".5">
                <stop offset="0" stopColor="#3f7a74" />
                <stop offset="1" stopColor="#1c5f69" />
              </linearGradient>
            </defs>
            <path d="M0 0h127v290H0z" fill="url(#sea)" />
            <path d="M0 0h127v48Q40 42 0 73z" fill="url(#sky)" />
          </svg>
        </Banner>
        <WizardText>
          <h2>完成新增簡單磁碟區精靈</h2>
          <p>您已順利完成新增簡單磁碟區精靈。</p>
          <label htmlFor="chosen">您已選取下列設定:</label>
          <Settings>
            <SettingsText id="chosen" readOnly value={SETTINGS} />
            <VScroll $w={15}><Chevron dir="up" /><VThumb $h={51} $top={3} /><Chevron dir="down" /></VScroll>
          </Settings>
          <p>要關閉這個精靈，請按一下 [完成]。</p>
        </WizardText>
      </WizardBody>
      <WizardFooter>
        <PushButton $w={69} $h={20}>&lt; 上一步(B)</PushButton>
        <PushButton $w={69} $h={20} $primary>完成</PushButton>
        <PushButton $w={70} $h={20}>取消</PushButton>
      </WizardFooter>
    </Wizard>
    <Watermark>TWbear.cc</Watermark>
  </>
);

/* ---------- file explorer ---------- */

const Explorer = styled.div`
  flex: none;
  background: #fff;
  border-bottom: 1px solid #999;
  box-shadow: 0 2px 8px rgba(0, 0, 0, 0.35);
  font-size: 9px;
  line-height: 12px;
  z-index: 1;
`;
const ExTitle = styled.header`
  display: flex;
  align-items: center;
  height: 20px;
`;
const QuickAccess = styled.div`
  display: flex;
  align-items: center;
  gap: 5px;
  width: 96px;
  color: #333;
`;
const ContextTab = styled.div`
  align-self: flex-end;
  width: 63px;
  height: 18px;
  line-height: 18px;
  text-align: center;
  background: #c3f0a2;
`;
const ExCaption = styled.span`
  margin: 0 auto 0 10px;
  color: #999;
`;
const WindowMarks = styled.div`
  display: flex;
  gap: 25px;
  padding-right: 5px;
`;
const ExTabs = styled.div`
  display: flex;
  height: 18px;
  border-bottom: 1px solid #dcdddf;
`;
const ExTab = styled.button<{ $w: number; $kind?: "file" | "active" }>`
  width: ${(p) => p.$w}px;
  overflow: hidden;
  ${(p) => p.$kind === "file" && css` background: #0a64b0; color: #fff; text-align: right; padding-right: 11px; direction: rtl; `}
  ${(p) => p.$kind === "active" && css` background: #f5f6f7; border: 1px solid #dcdddf; border-bottom: 0; `}
`;
const Ribbon = styled.div`
  display: flex;
  height: 69px;
  background: #f5f6f7;
  border-bottom: 1px solid #dcdddf;
  line-height: 11px;
`;
const Group = styled.section<{ $w: number; $pad?: number }>`
  display: flex;
  flex-direction: column;
  flex: none;
  width: ${(p) => p.$w}px;
  padding: 6px 0 2px;
  border-right: 1px solid #e0e1e3;
  text-align: center;
  footer { margin-top: auto; padding-right: ${(p) => p.$pad ?? 0}px; color: #555; }
`;
const GroupRow = styled.div`
  display: flex;
`;
const BigButton = styled.button<{ $w: number }>`
  display: flex;
  flex-direction: column;
  flex: none;
  align-items: center;
  gap: 2px;
  width: ${(p) => p.$w}px;
  white-space: pre;
`;
const SmallButtons = styled.div`
  display: flex;
  flex-direction: column;
  gap: 5px;
  padding-left: 2px;
  button { display: flex; align-items: center; gap: 2px; }
`;
const Address = styled.div`
  display: flex;
  align-items: center;
  gap: 6px;
  height: 28px;
  padding: 0 0 4px 8px;
`;
const AddressBox = styled.div`
  display: flex;
  align-items: center;
  gap: 4px;
  flex: 1;
  height: 17px;
  margin-left: -3px;
  padding-left: 1px;
  border: 1px solid #d9d9d9;
  span { padding-left: 1px; }
`;
const ExBody = styled.div`
  display: flex;
  height: 331px;
`;
const NavList = styled.ul`
  width: 79px;
  height: 330px;
  margin: 0;
  padding: 0;
  list-style: none;
  overflow: hidden;
`;
const NavItem = styled.li`
  display: grid;
  grid-template-columns: 12px 53px 9px;
  align-items: center;
  height: 17px;
  padding-left: 3px;
  &:first-child { margin-top: -3px; }
  span { overflow: hidden; white-space: nowrap; }
`;
const Content = styled.div`
  flex: 1;
  min-width: 0;
  padding-left: 5px;
  overflow: hidden;
`;
const Heading = styled.h3`
  display: flex;
  align-items: center;
  gap: 2px;
  height: 20px;
  margin: 0;
  font-size: 11px;
  line-height: 14px;
  font-weight: 400;
  color: #2b3f92;
  &::after { content: ""; flex: 1; height: 1px; margin-left: 4px; background: #e3e3e3; }
`;
const FolderList = styled.div`
  display: grid;
  gap: 8px;
  padding-top: 5px;
`;
const Folder = styled.div`
  display: flex;
  gap: 2px;
  height: 32px;
  padding: 1px 0 0 13px;
`;
const DriveList = styled.div`
  display: grid;
  gap: 3px;
  padding: 1px 0 0 6px;
`;
const Drive = styled.div<{ $on?: boolean; $bare?: boolean }>`
  display: grid;
  grid-template-columns: 32px 134px;
  align-content: start;
  column-gap: 5px;
  width: 178px;
  height: 37px;
  padding: ${(p) => (p.$bare ? 5 : 1)}px 0 0 4px;
  background: ${(p) => (p.$on ? "#d9d9d9" : "transparent")};
`;
const DriveIcon = styled.div<{ $bare?: boolean }>`
  position: relative;
  margin-top: ${(p) => (p.$bare ? -3 : 2)}px;
  height: 32px;
  b {
    position: absolute;
    left: 11px;
    top: 11px;
    padding: 0 2px;
    background: #111;
    color: #fff;
    border-radius: 2px;
    font: italic bold 7px/10px "Open Sans", sans-serif;
  }
`;
const Usage = styled.div`
  height: 10px;
  background: #e6e6e6;
  border: 1px solid #bcbcbc;
  i { display: block; height: 100%; background: #26a0da; }
`;
const Muted = styled.div`
  color: #7b7b7b;
`;
const ExStatus = styled.footer`
  display: flex;
  height: 15px;
  padding: 1px 0 0 1px;
  color: #24406c;
  span { padding-right: 7px; margin-right: 6px; border-right: 1px solid #e3e3e3; }
`;

const NAV = ["Kuma Protable", "KuMaSan", "Locale", "PhotoScape", "Photoshop CS", "Result20", "Result21", "Result22", "Result23", "SwiffChart", "Test Results", "Test Results1", "ThunderDB", "Wang", "原始相片-grid", "庫存SSD測試", "淡江硬體研習", "軟體序號", "新學習", "管理資料"];
const FOLDERS = [["objects", "3D 物件"], ["documents", "文件"], ["desktop", "桌面"], ["videos", "影片"]];

const Drop = () => <Svg $w={6} viewBox="0 0 16 16" aria-hidden="true"><path d="M1 4h14l-7 8z" fill="#222" /></Svg>;
const DropText = styled.span`
  display: inline-flex;
  align-items: center;
  gap: 1px;
`;

const FileExplorer = () => (
  <Explorer>
    <ExTitle>
      <QuickAccess>
        <Divider $h={9} /><ToolButton aria-label="內容" $pad={2}><Icon name="check" size={11} /></ToolButton>
        <Icon name="page" size={11} /><Drop /><Divider $h={9} />
      </QuickAccess>
      <ContextTab>管理</ContextTab>
      <ExCaption>本機</ExCaption>
      <WindowMarks>
        <Svg $w={8} viewBox="0 0 8 8"><path d="M0 4.500h8" stroke="#888" /></Svg>
        <Svg $w={8} viewBox="0 0 8 8"><path d="M.5.5h7v7h-7z" fill="none" stroke="#666" /></Svg>
      </WindowMarks>
    </ExTitle>
    <ExTabs>
      <ExTab $w={19} $kind="file">檔案</ExTab>
      <ExTab $w={37} $kind="active">電腦</ExTab>
      <ExTab $w={38}>檢視</ExTab>
      <ExTab $w={66}>磁碟機工具</ExTab>
    </ExTabs>
    <Ribbon>
      <Group $w={86} $pad={22}>
        <GroupRow>
          <CutLeft $w={7}><BigButton $w={18}><Icon name="check" size={22} />內容</BigButton></CutLeft>
          <BigButton $w={40}><Icon name="openFolder" size={22} />開啟</BigButton>
          <BigButton $w={34}><Icon name="rename" size={22} />重新命名</BigButton>
        </GroupRow>
        <footer>位置</footer>
      </Group>
      <Group $w={127}>
        <GroupRow>
          <BigButton $w={34}><Icon name="media" size={22} /><span>{"存取\n"}<DropText>媒體<Drop /></DropText></span></BigButton>
          <BigButton $w={50}><Icon name="netDrive" size={22} /><span>{"連線\n"}<DropText>網路磁碟機<Drop /></DropText></span></BigButton>
          <BigButton $w={40}><Icon name="netPlace" size={22} />{"新增一個\n網路位置"}</BigButton>
        </GroupRow>
        <footer>網路</footer>
      </Group>
      <Group $w={134}>
        <GroupRow>
          <BigButton $w={34}><Icon name="gear" size={22} />{"開啟\n設定"}</BigButton>
          <SmallButtons>
            <button type="button"><Icon name="uninstall" size={11} />解除安裝或變更程式</button>
            <button type="button"><Icon name="sysprops" size={11} />系統內容</button>
            <button type="button"><Icon name="manage" size={11} />管理</button>
          </SmallButtons>
        </GroupRow>
        <footer>系統</footer>
      </Group>
    </Ribbon>
    <Address>
      <Svg $w={12} viewBox="0 0 12 12"><path d="M1 6h10M7 2l4 4-4 4" fill="none" stroke="#c4c4c4" /></Svg>
      <Chevron dir="down" size={7} color="#666" weight={2} />
      <Svg $w={12} viewBox="0 0 12 12"><path d="M6 11V1.500M2 5.500l4-4 4 4" fill="none" stroke="#444" strokeWidth="1.200" /></Svg>
      <AddressBox><Icon name="pc" size={12} /><Chevron dir="right" size={7} weight={2} /><span>本機</span></AddressBox>
    </Address>
    <ExBody>
      <NavList>
        {NAV.map((n) => <NavItem key={n}><Icon name="folder" size={11} /><span>{n}</span><Icon name="pin" size={9} /></NavItem>)}
      </NavList>
      <VScroll $w={12}><Chevron dir="up" /><VThumb $h={153} $top={73} /><Chevron dir="down" /></VScroll>
      <Content>
        <Heading><Chevron dir="down" size={10} color="#777" weight={1} />資料夾 (7)</Heading>
        <FolderList>
          {FOLDERS.map(([icon, name]) => <Folder key={name}><BigIcon name={icon} />{name}</Folder>)}
        </FolderList>
        <Heading><Chevron dir="down" size={10} color="#777" weight={1} />裝置和磁碟機 (5)</Heading>
        <DriveList>
          <Drive>
            <DriveIcon><BigIcon name="windowsDrive" /></DriveIcon>
            <div>本機磁碟 (C:)<Usage><i style={{ width: `${Math.round(((221 - 76.3) / 221) * 100)}%` }} /></Usage><Muted>剩餘 76.3 GB，共 221 GB</Muted></div>
          </Drive>
          <Drive $bare>
            <DriveIcon $bare><BigIcon name="dvdDrive" /><b>DVD</b></DriveIcon>
            <div>DVD RW 磁碟機 (E:)</div>
          </Drive>
          <Drive $on>
            <DriveIcon><BigIcon name="drive" /></DriveIcon>
            <div>ironwolfpro30tb (G:)<Usage /><Muted>剩餘 27.2 TB，共 27.2 TB</Muted></div>
          </Drive>
        </DriveList>
        <Heading><Chevron dir="down" size={10} color="#777" weight={1} />網路位置 (6)</Heading>
      </Content>
    </ExBody>
    <ExStatus><span>個項目</span><span>已選取 1 個項目</span></ExStatus>
  </Explorer>
);

/* ---------- drive properties dialog ---------- */

const Props = styled.div`
  position: absolute;
  z-index: 2;
  left: 284px;
  top: 72px;
  width: 300px;
  padding-bottom: 6px;
  background: #f0f0f0;
  border: 1px solid #777;
  box-shadow: 0 3px 12px rgba(0, 0, 0, 0.4);
  font-size: 9px;
  line-height: 12px;
`;
const PropsTitle = styled.header`
  display: flex;
  align-items: center;
  gap: 4px;
  height: 21px;
  margin-bottom: 7px;
  padding: 0 7px 0 6px;
  background: #fff;
  button { margin-left: auto; }
`;
const TabRow = styled.div<{ $cols: string }>`
  display: grid;
  grid-template-columns: ${(p) => p.$cols};
  margin: 0 8px 0 6px;
`;
const Tab = styled.button<{ $on?: boolean }>`
  height: ${(p) => (p.$on ? 16 : 14)}px;
  margin: ${(p) => (p.$on ? "-1px 0 -1px -1px" : "0")};
  background: ${(p) => (p.$on ? "#fff" : "#f0f0f0")};
  border: 1px solid #dcdcdc;
  border-bottom: 0;
  z-index: ${(p) => (p.$on ? 1 : 0)};
  & + & { border-left: 0; }
`;
const Sheet = styled.div`
  height: 315px;
  margin: 0 6px 7px 5px;
  padding: 0 10px 0 11px;
  background: #fff;
  border: 1px solid #dcdcdc;
`;
const NameRow = styled.div`
  display: grid;
  grid-template-columns: 60px 1fr;
  align-items: center;
  height: 43px;
  padding-top: 6px;
`;
const NameInput = styled.input`
  width: 100%;
  height: 20px;
  padding: 0 2px 3px;
  border: 1px solid #2a84cc;
  outline: none;
  font-size: 9px;
  line-height: 12px;
  &::selection { background: #0078d7; color: #fff; }
`;
const Rule = styled.hr<{ $gap: number }>`
  height: 1px;
  margin: ${(p) => p.$gap}px 2px ${(p) => p.$gap}px 0;
  border: 0;
  background: #a8a8a8;
`;
const Facts = styled.dl`
  display: grid;
  grid-template-columns: 60px 1fr;
  margin: 0;
  padding-top: 3px;
  line-height: 18px;
  dd { margin: 0; }
`;
const Space = styled.div`
  display: grid;
  grid-template-columns: 12px 48px 1fr 44px;
  align-items: center;
  column-gap: 6px;
  height: 18px;
  padding-right: 29px;
  white-space: nowrap;
  > :nth-child(3), > :nth-child(4) { text-align: right; }
`;
const Donut = styled.div`
  width: 46px;
  height: 46px;
  margin: 3px auto 4px;
  border: 9px solid #ababab;
  border-radius: 50%;
`;
const Cleanup = styled.div`
  display: grid;
  grid-template-columns: 66px 1fr 66px;
  align-items: end;
  text-align: center;
`;
const IndexOption = styled.label`
  display: flex;
  align-items: center;
  gap: 2px;
  margin-top: 44px;
  white-space: nowrap;
`;
const Tick = styled.input`
  appearance: none;
  width: 10px;
  height: 10px;
  margin: 0;
  border: 1px solid #333;
  background: #fff;
  &:checked::after {
    content: "";
    display: block;
    width: 3px;
    height: 6px;
    margin-left: 3px;
    border: solid #222;
    border-width: 0 1px 1px 0;
    transform: rotate(40deg);
  }
`;
const PropsFooter = styled.footer`
  display: flex;
  justify-content: flex-end;
  gap: 6px;
  padding-right: 5px;
`;
const Pointer = styled.svg`
  position: absolute;
  left: 196px;
  top: 5px;
  width: 10px;
  height: 15px;
`;

const DriveProperties = () => {
  const name = useRef<HTMLInputElement>(null);
  useEffect(() => {
    name.current?.focus({ preventScroll: true });
    name.current?.select();
  }, []);
  return (
    <Props role="dialog" aria-label="內容">
      <PropsTitle><Icon name="smallDrive" size={12} />ironwolfpro30tb (G:) - 內容<button type="button" aria-label="關閉"><CloseMark /></button></PropsTitle>
      <TabRow $cols="107fr 89fr 88fr"><Tab>以前的版本</Tab><Tab>配額</Tab><Tab>自訂</Tab></TabRow>
      <TabRow $cols="59fr 55fr 57fr 57fr 57fr"><Tab $on>一般</Tab><Tab>工具</Tab><Tab>硬體</Tab><Tab>共用</Tab><Tab>安全性</Tab></TabRow>
      <Sheet>
        <NameRow><Icon name="smallDrive" size={22} /><NameInput ref={name} aria-label="磁碟標籤" defaultValue="ironwolfpro30tb" /></NameRow>
        <Rule $gap={0} />
        <Facts>
          <dt>類型:</dt><dd>本機磁碟</dd>
          <dt>檔案系統:</dt><dd>NTFS</dd>
        </Facts>
        <Rule $gap={3} />
        <Space><Swatch $c="#26a0da" $s={12} /><span>已使用空間:</span><span>566,616,064 個位元組</span><span>540 MB</span></Space>
        <Space><Swatch $c="#ababab" $s={12} /><span>可用空間:</span><span>29,999,777,841,152 個位元</span><span>27.2 TB</span></Space>
        <Rule $gap={4} />
        <Space><i /><span>容量:</span><span>30,000,344,457,216 個位元</span><span>27.2 TB</span></Space>
        <Donut />
        <Cleanup><i /><span>磁碟機 G:</span><PushButton $w={66} $h={18}>磁碟清理(D)</PushButton></Cleanup>
        <Rule $gap={4} />
        <IndexOption><Tick type="checkbox" defaultChecked />允許為這個磁碟機中的檔案內容建立索引 (除了檔案屬性之外)(I)</IndexOption>
      </Sheet>
      <PropsFooter>
        <PushButton $w={61} $h={18} $primary>確定</PushButton>
        <PushButton $w={62} $h={18}>取消</PushButton>
        <PushButton $w={61} $h={18} disabled>套用(A)</PushButton>
      </PropsFooter>
      <Pointer viewBox="0 0 10 15" aria-hidden="true">
        <path d="M1 .8v11.500l2.700-2.500 1.800 4.200 2-.9-1.800-4L9.200 9z" fill="#fff" stroke="#222" strokeWidth=".9" />
      </Pointer>
    </Props>
  );
};

const LowerBody = styled(DiskBody)`
  gap: 2px;
  padding-top: 0;
`;
const PlainSide = styled.div`
  width: 73px;
  background: #fff;
  border-right: 2px solid #a6a6a6;
`;
const LowerRows = styled(DiskRows)`
  padding: 6px 0 0;
`;
const BlankSide = styled.div`
  flex: none;
  width: 93px;
  margin-left: 1px;
  background: #fff;
  border-left: 2px solid #828282;
`;
const LowerScroll = styled(VScroll)`
  justify-content: flex-end;
`;

const ExplorerOverDisks = () => (
  <Panel $edge="#2f6690" $top={2}>
    <FileExplorer />
    <LowerBody>
      <PlainSide />
      <Center>
        <GraphArea>
          <LowerRows>
            <Disk small id={2} size="27940.00 GB" vols={[{ name: "ironwolfpro30tb  (G:)", size: "27940.00 GB NTFS", state: "良好 (主要磁碟分割)" }]} />
          </LowerRows>
          <LowerScroll $w={12}><Chevron dir="down" /></LowerScroll>
        </GraphArea>
        <DiskLegend small />
      </Center>
      <BlankSide />
    </LowerBody>
    <StatusBar $h={15}><StatusCell $w={95} /><StatusCell $w={20} /></StatusBar>
    <DriveProperties />
  </Panel>
);

export default function App() {
  return (
    <>
      <GlobalStyle />
      <Collage>
        <DeviceManager />
        <DiskManagement />
        <ExplorerOverDisks />
        <DiskManagement plain><VolumeWizard /></DiskManagement>
      </Collage>
    </>
  );
}
